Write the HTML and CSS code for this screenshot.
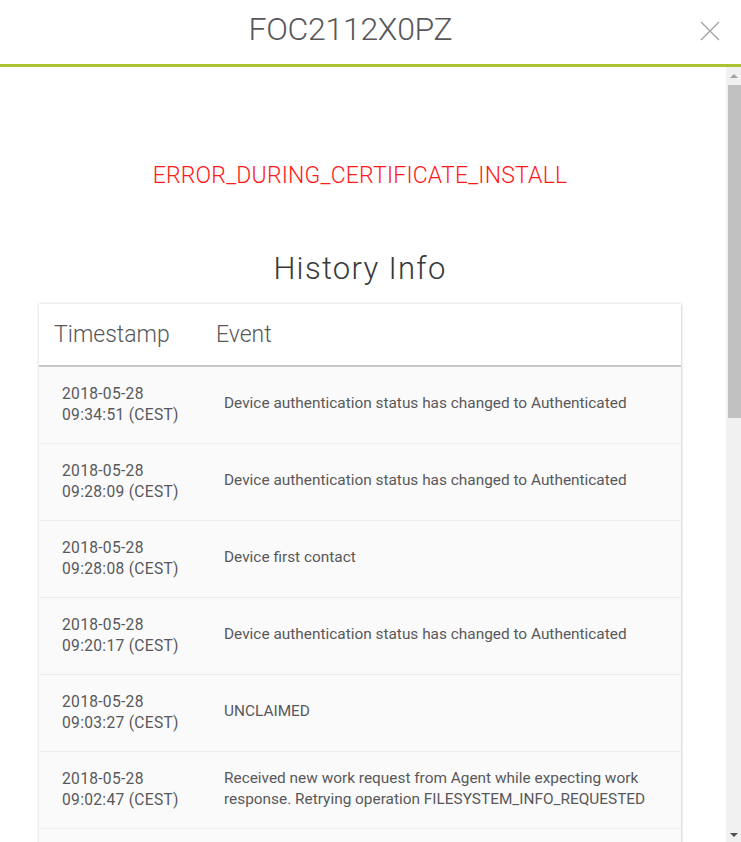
FILE: index.html
```html
<!DOCTYPE html>
<html>
<head>
<meta charset="utf-8">
<link rel="stylesheet" href="styles.css">
</head>
<body>
<div class="modal">
  <header class="modal-header">
    <h1 class="modal-title">FOC2112X0PZ</h1>
    <button class="close" aria-label="Close">
      <svg width="20" height="20" viewBox="0 0 20 20"><path d="M1 1L19 19M19 1L1 19" stroke="#9fa0a4" stroke-width="1.2" fill="none"/></svg>
    </button>
  </header>
  <div class="modal-body">
    <div class="content">
      <p class="error">ERROR_DURING_CERTIFICATE_INSTALL</p>
      <h2 class="section-title">History Info</h2>
      <div class="card">
        <div class="thead">
          <div class="c-time">Timestamp</div>
          <div class="c-event">Event</div>
        </div>
        <div class="row"><div class="c-time">2018-05-28<br>09:34:51 (CEST)</div><div class="c-event">Device authentication status has changed to Authenticated</div></div>
        <div class="row"><div class="c-time">2018-05-28<br>09:28:09 (CEST)</div><div class="c-event">Device authentication status has changed to Authenticated</div></div>
        <div class="row"><div class="c-time">2018-05-28<br>09:28:08 (CEST)</div><div class="c-event">Device first contact</div></div>
        <div class="row"><div class="c-time">2018-05-28<br>09:20:17 (CEST)</div><div class="c-event">Device authentication status has changed to Authenticated</div></div>
        <div class="row"><div class="c-time">2018-05-28<br>09:03:27 (CEST)</div><div class="c-event">UNCLAIMED</div></div>
        <div class="row"><div class="c-time">2018-05-28<br>09:02:47 (CEST)</div><div class="c-event">Received new work request from Agent while expecting work response. Retrying operation FILESYSTEM_INFO_REQUESTED</div></div>
        <div class="row"></div>
      </div>
    </div>
    <div class="scrollbar" aria-hidden="true">
      <div class="sb-btn"><span class="arrow-up"></span></div>
      <div class="sb-track"><div class="sb-thumb"></div></div>
      <div class="sb-btn"><span class="arrow-down"></span></div>
    </div>
  </div>
</div>
</body>
</html>
```
FILE: styles.css
```css
html, body {
  margin: 0;
  padding: 0;
  background: #fff;
  font-family: Roboto, "Liberation Sans", sans-serif;
  overflow: hidden;
}
.modal {
  width: 741px;
  height: 842px;
  display: flex;
  flex-direction: column;
}
.modal-header {
  height: 64px;
  border-bottom: 3px solid #abc233;
  display: flex;
  align-items: center;
  justify-content: center;
  position: relative;
  flex: none;
  padding-right: 40px;
}
.modal-title {
  margin: -6px 0 0;
  font-size: 32px;
  font-weight: 300;
  color: #58585b;
  letter-spacing: -0.3px;
}
.close {
  position: absolute;
  right: 21px;
  top: 21px;
  width: 20px;
  height: 20px;
  padding: 0;
  border: 0;
  background: none;
  display: block;
}
.close svg { display: block; }
.modal-body {
  flex: 1;
  min-height: 0;
  display: flex;
}
.content {
  flex: 1;
  overflow: hidden;
  padding: 0 45px 0 39px;
}
.scrollbar {
  width: 15px;
  flex: none;
  background: #f1f1f1;
  display: flex;
  flex-direction: column;
}
.sb-btn {
  height: 18px;
  flex: none;
  display: flex;
  align-items: center;
  justify-content: center;
  padding-left: 1px;
}
.arrow-up {
  width: 0;
  height: 0;
  border-left: 4px solid transparent;
  border-right: 4px solid transparent;
  border-bottom: 4px solid #a3a3a3;
}
.arrow-down {
  width: 0;
  height: 0;
  border-left: 4px solid transparent;
  border-right: 4px solid transparent;
  border-top: 4px solid #505050;
  margin-top: 4px;
}
.sb-track {
  flex: 1;
  padding-left: 2px;
}
.sb-thumb {
  height: 333px;
  background: #c1c1c1;
}
.error {
  margin: 96px 0 0;
  text-align: center;
  color: #ff1a1a;
  font-size: 23px;
  font-weight: 300;
  letter-spacing: 0.2px;
  line-height: 26px;
}
.section-title {
  margin: 62px 0 0;
  text-align: center;
  font-size: 31px;
  font-weight: 300;
  color: #39393b;
  letter-spacing: 1.3px;
  line-height: 36px;
}
.card {
  margin-top: 17px;
  background: #fff;
  box-shadow: 0 0 3px rgba(0,0,0,0.18), 1px 1px 2px rgba(0,0,0,0.08);
}
.thead {
  height: 61px;
  display: flex;
  align-items: center;
  border-bottom: 2px solid #c8c8c8;
  font-size: 23px;
  font-weight: 300;
  color: #58585b;
  padding-left: 15px;
}
.thead .c-time { width: 162px; }
.row {
  height: 76px;
  display: flex;
  align-items: center;
  background: #fafafa;
  border-bottom: 1px solid #ececec;
  padding-left: 23px;
  font-size: 15.4px;
  color: #58585b;
  line-height: 21px;
}
.row .c-time { width: 162px; flex: none; font-size: 15.6px; letter-spacing: 0.3px; }
.row .c-event { flex: 1; padding-right: 20px; margin-top: -3px; }
```
